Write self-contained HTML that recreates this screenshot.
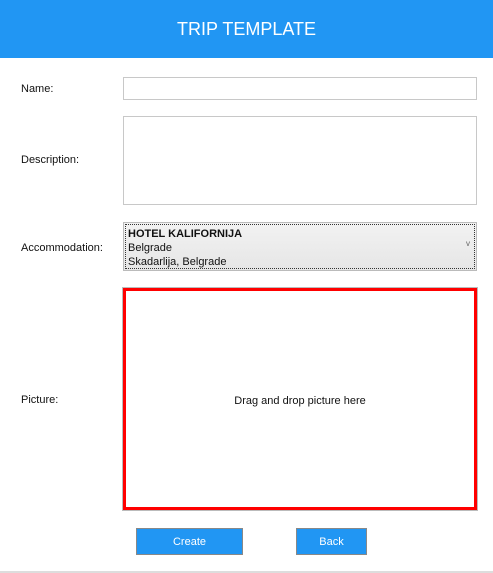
<!DOCTYPE html>
<html><head><style>
body{margin:0;width:493px;height:573px;background:#fff;font-family:"Segoe UI","Liberation Sans",sans-serif;font-size:11px;color:#111;position:relative;overflow:hidden}
.hdr{position:absolute;left:0;top:0;width:493px;height:58px;background:#2196f3;color:#fff;font-size:18px;text-align:center;line-height:58px}
.lbl{position:absolute;left:21px}
.box{position:absolute;border:1px solid #c8c8c8;background:#fff;box-sizing:border-box}
.btn{position:absolute;background:#2196f3;border:1px solid #888;color:#fff;text-align:center;line-height:27px;box-sizing:border-box;font-size:11px}
</style></head><body>
<div class="hdr">TRIP TEMPLATE</div>
<div class="lbl" style="top:83px">Name:</div>
<div class="box" style="left:123px;top:77px;width:354px;height:23px"></div>
<div class="lbl" style="top:154px">Description:</div>
<div class="box" style="left:123px;top:116px;width:354px;height:89px"></div>
<div class="lbl" style="top:242px">Accommodation:</div>
<div class="box" style="left:123px;top:222px;width:354px;height:49px;background:linear-gradient(#f2f2f2,#e6e6e6);border-color:#bbb">
<div style="position:absolute;inset:1px;border:1px dotted #333"></div>
<div style="position:absolute;left:4px;top:4px;line-height:14px"><b>HOTEL KALIFORNIJA</b><br>Belgrade<br>Skadarlija, Belgrade</div>
<div style="position:absolute;right:6px;top:16px;font-size:8px;color:#666">v</div>
</div>
<div class="lbl" style="top:394px">Picture:</div>
<div class="box" style="left:123px;top:288px;width:354px;height:222px;border:3px solid #f00;outline:1px solid #bbb">
<div style="position:absolute;left:0;right:0;top:104px;text-align:center">Drag and drop picture here</div></div>
<div class="btn" style="left:136px;top:528px;width:107px;height:27px">Create</div>
<div class="btn" style="left:296px;top:528px;width:71px;height:27px">Back</div>
<div style="position:absolute;left:0;top:571px;width:493px;height:2px;background:#ddd"></div>
</body></html>
